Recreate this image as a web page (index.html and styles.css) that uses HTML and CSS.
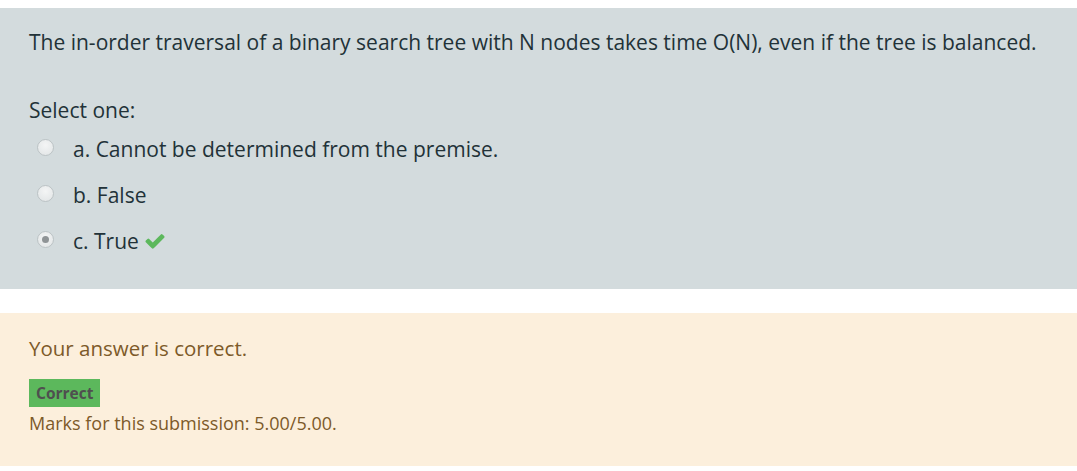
FILE: index.html
```html
<!DOCTYPE html>
<html>
<head>
<meta charset="utf-8">
<link rel="stylesheet" href="styles.css">
</head>
<body>
<div class="que">
  <div class="formulation">
    <p class="qtext">The in-order traversal of a binary search tree with N nodes takes time O(N), even if the tree is balanced.</p>
    <p class="prompt">Select one:</p>
    <div class="answer">
      <div class="opt"><span class="radio"></span><span class="label">a. Cannot be determined from the premise.</span></div>
      <div class="opt"><span class="radio"></span><span class="label">b. False</span></div>
      <div class="opt"><span class="radio checked"></span><span class="label">c. True</span>
        <svg class="tick" viewBox="0 0 1792 1792" width="22" height="22"><path fill="#5cb85c" d="M1671 566q0 40-28 68l-724 724-136 136q-28 28-68 28t-68-28l-136-136-362-362q-28-28-28-68t28-68l136-136q28-28 68-28t68 28l294 295 656-657q28-28 68-28t68 28l136 136q28 28 28 68z"/></svg>
      </div>
    </div>
  </div>
  <div class="outcome">
    <p class="feedback">Your answer is correct.</p>
    <span class="badge">Correct</span>
    <p class="marks">Marks for this submission: 5.00/5.00.</p>
  </div>
</div>
</body>
</html>
```

FILE: styles.css
```css
html, body {
  margin: 0;
  padding: 0;
  background: #ffffff;
}
body {
  font-family: "Open Sans", "Noto Sans", sans-serif;
  padding-top: 8px;
}
.formulation {
  background: #d3dbdd;
  color: #223238;
  padding: 20px 29px 0 29px;
  height: 281px;
  box-sizing: border-box;
}
.qtext {
  margin: 0;
  font-size: 21px;
  line-height: 28px;
}
.prompt {
  margin: 40px 0 0 0;
  font-size: 21px;
  line-height: 28px;
}
.answer {
  display: flex;
  flex-direction: column;
  gap: 18px;
  margin-top: 11px;
  padding-left: 8px;
}
.opt {
  display: flex;
  align-items: center;
  height: 28px;
  font-size: 21px;
}
.radio {
  width: 15px;
  height: 15px;
  border-radius: 50%;
  border: 1px solid #bcc3c5;
  background: radial-gradient(circle at 50% 35%, #f4f5f5, #e0e4e5);
  margin: -3px 19px 0 0;
  position: relative;
  flex: none;
}
.radio.checked::after {
  content: "";
  position: absolute;
  left: 4px;
  top: 4px;
  width: 7px;
  height: 7px;
  border-radius: 50%;
  background: #8f9496;
}
.tick {
  margin-left: 5px;
}
.outcome {
  background: #fcefdc;
  color: #7d5a29;
  margin-top: 24px;
  height: 153px;
  padding: 21px 29px 0 29px;
  box-sizing: border-box;
}
.feedback {
  margin: 0;
  font-size: 20.5px;
  line-height: 28px;
}
.badge {
  display: inline-block;
  margin-top: 17px;
  background: #5cb85c;
  color: #4f4f4f;
  font-weight: 700;
  font-size: 15.5px;
  line-height: 28px;
  padding: 0 7px;
}
.marks {
  margin: 4px 0 0 0;
  font-size: 18px;
  line-height: 24px;
}
```
